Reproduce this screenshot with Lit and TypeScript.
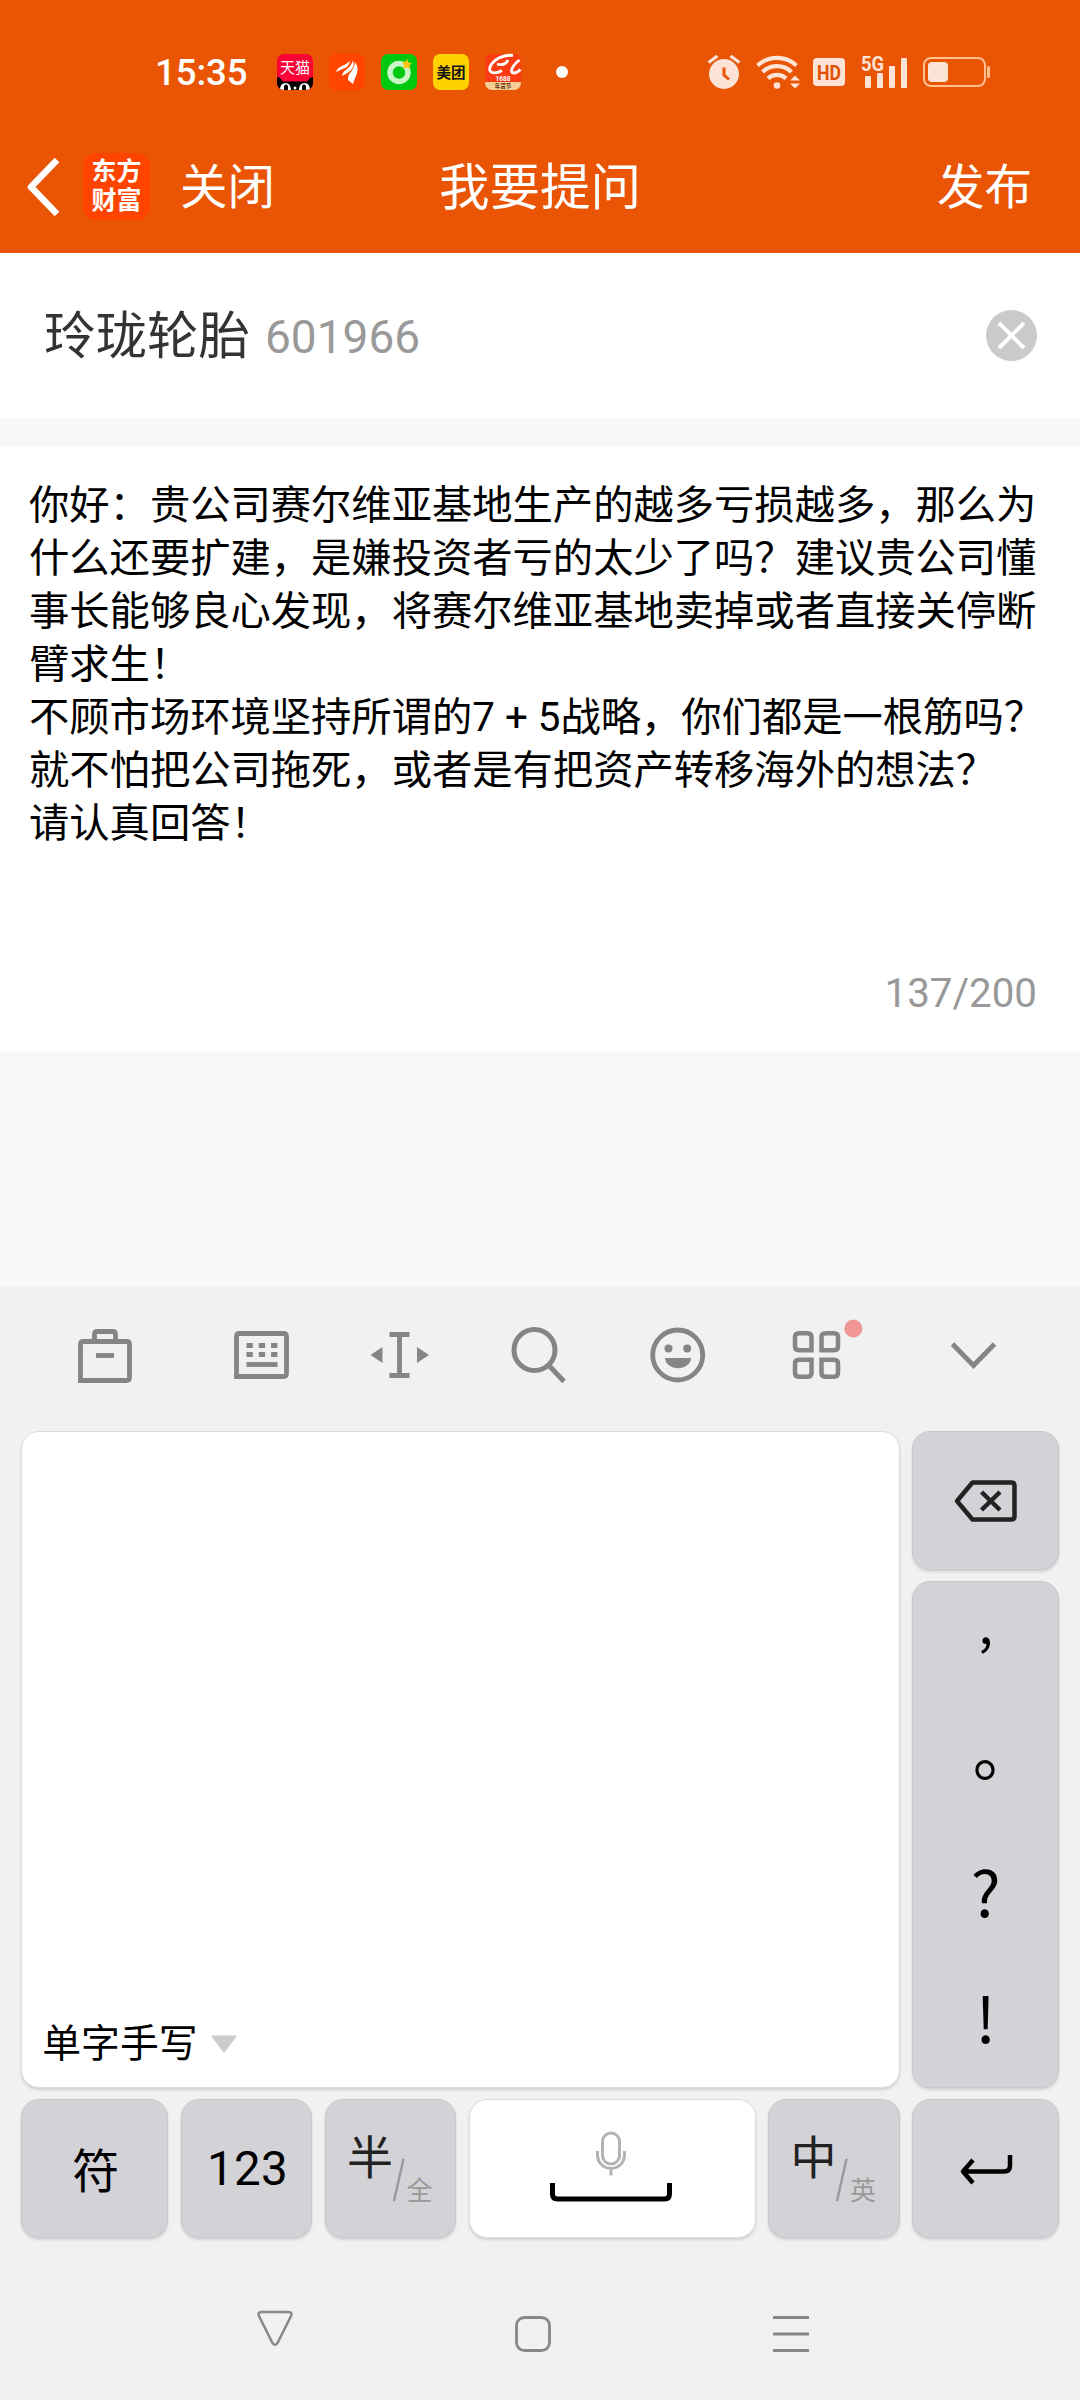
import { LitElement, html, css, svg } from "lit";
import { customElement, property } from "lit/decorators.js";

const SANS = css`Roboto, "Noto Sans CJK SC", sans-serif`;

@customElement("status-bar")
class StatusBar extends LitElement {
  static styles = css`
    :host { display: flex; justify-content: space-between; align-items: center; height: 64px; padding: 40px 90px 0 155px; font-family: ${SANS}; }
    .left, .apps, .right { display: flex; align-items: center; }
    .time { color: #fff; font-size: 36.500px; font-weight: 500; line-height: 40px; width: 122px; padding-top: 2px; }
    .apps { gap: 16px; }
    .dot { width: 12px; height: 12px; border-radius: 50%; background: #fff; margin-left: 35px; }
    .right { color: #fde3d5; }
    .alarm { margin-right: 15px; }
    .wifi { margin-right: 12px; }
    .hd { margin-right: 16px; }
    .signal { margin-right: 15px; }
    svg { display: block; overflow: visible; }
  `;
  render() {
    return html`
      <div class="left">
        <span class="time">15:35</span>
        <div class="apps">
          <svg width="36" height="36" viewBox="0 0 36 36">
            <defs><clipPath id="r"><rect width="36" height="36" rx="7" /></clipPath></defs>
            <g clip-path="url(#r)">
              <rect width="36" height="36" fill="#ff0036" />
              <text x="18" y="19" font-size="15" text-anchor="middle" fill="#fff">天猫</text>
              <path d="M0 36V23c3 0 4 2.500 6 4.500h24c2-2 3-4.500 6-4.500v13z" fill="#000" />
              <path d="M3 36c0-4 2-7 5.500-7s5.500 3 5.500 7zM22 36c0-4 2-7 5.500-7s5.500 3 5.500 7z" fill="#fff" />
              <path d="M7 36v-4l2-2 2 2v4zM25 36v-4l2-2 2 2v4z" fill="#000" />
              <circle cx="18" cy="34" r="1.500" fill="#fff" />
            </g>
          </svg>
          <svg width="36" height="36" viewBox="0 0 36 36">
            <rect width="36" height="36" rx="7" fill="#ff4500" />
            <path d="M7 18C9 12 14 13 21 7C20 14 15 14 7 18ZM13 22C14 15 21 16 24 6.500C27 15 19 19 13 22ZM19 26C18 19 25 18 26 8C32 16 26 22 24 30Z" fill="#fff" />
          </svg>
          <svg width="36" height="36" viewBox="0 0 36 36">
            <rect width="36" height="36" rx="7" fill="#00c80e" />
            <circle cx="18" cy="18.500" r="9" fill="none" stroke="#c9f5c9" stroke-width="5.500" />
            <path d="M26 5l1.500 3.500 3.500.5-2.500 2.500.5 3.500-3.500-1.500-3.500 1 1-3.500-2-3 3.500-.3z" fill="#ffc61a" />
          </svg>
          <svg width="36" height="36" viewBox="0 0 36 36">
            <rect width="36" height="36" rx="7" fill="#ffd100" />
            <text x="18" y="23.5" font-size="14.500" font-weight="700" text-anchor="middle" fill="#111">美团</text>
          </svg>
          <svg width="36" height="36" viewBox="0 0 36 36">
            <rect width="36" height="36" rx="7" fill="#fb3c12" />
            <path d="M28 1.500C18 0 8 6 5 13c-2 7 6 7 12 3.500M12 10c6 2 10-1 11-4M34.500 6c-8 6-10 13-6 13 3 0 5-1.500 7-3.500" fill="none" stroke="#fff" stroke-width="2.800" />
            <text x="18" y="26.500" font-size="6.500" font-weight="700" text-anchor="middle" fill="#fff">1688</text>
            <path d="M0 28h36v1a7 7 0 0 1-7 7H7a7 7 0 0 1-7-7z" fill="#f6cf94" />
            <text x="18" y="34.200" font-size="5.500" font-weight="700" text-anchor="middle" fill="#5a2708">年货节</text>
          </svg>
        </div>
        <i class="dot"></i>
      </div>
      <div class="right">
        <svg class="alarm" width="33" height="36" viewBox="0 0 33 36" fill="none">
          <circle cx="16" cy="20" r="15" fill="currentColor" />
          <path d="M.5 8.500 9.500 2M31.500 8.500 22.500 2" stroke="currentColor" stroke-width="3.200" />
          <path d="M16 13.500v7.500l5 4.500" stroke="#e95504" stroke-width="3" />
        </svg>
        <svg class="wifi" width="45" height="36" viewBox="0 0 45 36" fill="none" stroke="currentColor" stroke-width="4.200">
          <path d="M1.500 11.500a29 29 0 0 1 39 0M6.500 18a21 21 0 0 1 29 0M12 24.500a13 13 0 0 1 18 0" />
          <circle cx="21" cy="31.500" r="3.300" fill="currentColor" stroke="none" />
          <path d="M34 26.500l5-5 5 5zM34 29.500l5 5 5-5z" fill="currentColor" stroke="none" />
        </svg>
        <svg class="hd" width="32" height="30" viewBox="0 0 32 30">
          <rect y="1" width="32" height="28" rx="4" fill="currentColor" />
          <text x="16" y="22.500" font-size="21" font-weight="700" text-anchor="middle" textLength="24" lengthAdjust="spacingAndGlyphs" fill="#e05000">HD</text>
        </svg>
        <svg class="signal" width="47" height="36" viewBox="0 0 47 36" fill="currentColor">
          <text x="0" y="17" font-size="20" font-weight="700" textLength="23" lengthAdjust="spacingAndGlyphs">5G</text>
          <rect x="4" y="22" width="6" height="12" rx="1" /><rect x="16" y="19" width="6" height="15" rx="1" />
          <rect x="28" y="12" width="6" height="22" rx="1" /><rect x="40" y="4" width="6" height="30" rx="1" />
        </svg>
        <svg width="67" height="30" viewBox="0 0 67 30" fill="none">
          <rect x="1" y="1" width="61" height="28" rx="7" stroke="#ffc090" stroke-width="2" />
          <rect x="5" y="5" width="20" height="20" rx="4" fill="currentColor" />
          <rect x="64" y="9" width="3" height="12" rx="1.500" fill="#ffc090" />
        </svg>
      </div>`;
  }
}

@customElement("nav-header")
class NavHeader extends LitElement {
  static styles = css`
    :host { display: grid; grid-template-columns: 1fr auto 1fr; align-items: center; height: 133px; padding: 16px 48px 0; color: #fff; font-family: ${SANS}; font-size: 47.500px; line-height: 60px; }
    .left { display: flex; align-items: center; margin-left: -22px; }
    .close, .title, .post { padding-top: 3px; }
    .back { display: block; margin-right: 23px; }
    .logo { display: flex; flex-direction: column; justify-content: center; width: 67px; height: 67px; margin-right: 30px; border-radius: 13px; background: #ff4400; text-align: center; font-size: 25px; line-height: 28.500px; font-weight: 700; }
    .title { font-size: 50.500px; }
    .post { text-align: right; }
  `;
  render() {
    return html`
      <div class="left">
        <svg class="back" width="34" height="58" viewBox="0 0 34 58" fill="none" stroke="#fff" stroke-width="6.500">
          <path d="M31 2 5 29 31 56" stroke-linejoin="round" />
        </svg>
        <div class="logo"><span>东方</span><span>财富</span></div>
        <span class="close">关闭</span>
      </div>
      <span class="title">我要提问</span>
      <span class="post">发布</span>`;
  }
}

@customElement("question-form")
class QuestionForm extends LitElement {
  static styles = css`
    :host { display: block; font-family: ${SANS}; background: #f6f8fa; }
    .stock { display: flex; align-items: center; height: 165px; padding: 0 43px 0 44px; background: #fff; }
    .name { color: #333; font-size: 51.500px; line-height: 60px; padding-top: 3px; }
    .code { color: #999; font-size: 46px; line-height: 60px; margin-left: 15px; padding-top: 2px; }
    .clear { display: block; margin-left: auto; }
    .body { display: flex; flex-direction: column; justify-content: space-between; margin-top: 29px; padding: 32px 43px 30px 29px; height: 542.500px; background: #fff; }
    .text { color: #000; font-size: 40.300px; line-height: 53px; white-space: pre; }
    .count { align-self: flex-end; color: #999; font-size: 40.300px; line-height: 56px; }
  `;
  render() {
    const lines = [
      "你好：贵公司赛尔维亚基地生产的越多亏损越多，那么为",
      "什么还要扩建，是嫌投资者亏的太少了吗？建议贵公司懂",
      "事长能够良心发现，将赛尔维亚基地卖掉或者直接关停断",
      "臂求生！",
      "不顾市场环境坚持所谓的7 + 5战略，你们都是一根筋吗？",
      "就不怕把公司拖死，或者是有把资产转移海外的想法？",
      "请认真回答！",
    ];
    return html`
      <div class="stock">
        <span class="name">玲珑轮胎</span><span class="code">601966</span>
        <svg class="clear" width="51" height="51" viewBox="0 0 51 51">
          <circle cx="25.500" cy="25.500" r="25.500" fill="#cacaca" />
          <path d="M13 13 38 38M38 13 13 38" stroke="#fff" stroke-width="4" />
        </svg>
      </div>
      <div class="body">
        <div class="text">${lines.map((l) => html`<div>${l}</div>`)}</div>
        <span class="count">137/200</span>
      </div>`;
  }
}

@customElement("tool-row")
class ToolRow extends LitElement {
  static styles = css`
    :host { display: flex; align-items: center; height: 136px; padding: 0 35.500px; color: #858585; }
    .slot { width: 138.800px; flex: none; display: flex; justify-content: center; }
    .slot:first-child { margin-right: 18px; }
    .slot:last-child { margin-left: 18px; }
    svg { display: block; overflow: visible; }
  `;
  render() {
    const icons = [
      svg`<path d="M7.500 61.500V25.500q0-3 3-3h43q3 0 3 3v33q0 3-3 3z" /><path d="M21.500 22V15.500q0-3 3-3h15q3 0 3 3V22" /><path d="M23 36.500h18" />`,
      svg`<path d="M6.500 57.500V17.500q0-3 3-3h44q3 0 3 3v37q0 3-3 3z" /><path d="M16.500 26.500h31M16.500 35.500h31" stroke-dasharray="6.300 6" /><path d="M16.500 45.500h31" />`,
      svg`<path d="M21.500 15.500h20M21.500 56.500h20M31.500 15v42" /><path d="M2.500 36l12-8v16zM61 36 49 28v16z" fill="currentColor" stroke="none" />`,
      svg`<circle cx="27.500" cy="31" r="20.500" stroke-width="5" /><path d="M41.500 46 57 62.500" stroke-width="5" />`,
      svg`<circle cx="31.700" cy="36" r="25" /><circle cx="22.500" cy="29.500" r="4" fill="currentColor" stroke="none" /><circle cx="41.200" cy="29.500" r="4" fill="currentColor" stroke="none" /><path d="M19 39h26c-1 13.500-25 13.500-26 0z" fill="currentColor" stroke="none" />`,
      svg`<g stroke-width="4.500"><path d="M26.500 31.300v-13q0-4-4-4H14q-4 0-4 4v9q0 4 4 4zM36.500 31.300v-13q0-4 4-4H49q4 0 4 4v9q0 4-4 4zM26.500 40.800v13q0 4-4 4H14q-4 0-4-4v-9q0-4 4-4zM36.500 40.800v13q0 4 4 4H49q4 0 4-4v-9q0-4-4-4z" /></g><circle cx="68.300" cy="9.500" r="9" fill="#f09696" stroke="none" />`,
      svg`<path d="M10.500 25 31.500 46.500 52.500 25" />`,
    ];
    return html`${icons.map((i) => html`<div class="slot"><svg width="64" height="72" viewBox="0 0 64 72" fill="none" stroke="currentColor" stroke-width="4.800">${i}</svg></div>`)}`;
  }
}

@customElement("key-cap")
class KeyCap extends LitElement {
  @property({ type: Boolean, reflect: true }) light = false;
  static styles = css`
    :host { display: flex; align-items: center; justify-content: center; box-sizing: border-box; border-radius: 18px; background: #d3d2d7; border: 1px solid #c8c8cc; box-shadow: 0 2px 3px rgba(0, 0, 0, 0.13); }
    :host([light]) { background: #fff; border-color: #dcdcdc; }
  `;
  render() {
    return html`<slot></slot>`;
  }
}

@customElement("ime-keyboard")
class ImeKeyboard extends LitElement {
  static styles = css`
    :host { display: block; height: 1113px; background: #f1f1f1; font-family: ${SANS}; color: #000; }
    svg { display: block; }
    .main { display: grid; grid-template-columns: 879px 147px; grid-template-rows: 139px 507px; gap: 11px 12px; padding: 0 21.300px; margin-top: 8px; }
    .pad { grid-row: span 2; align-items: flex-end; justify-content: flex-start; }
    .mode { display: flex; align-items: center; gap: 13px; padding: 0 0 16px 20px; font-size: 38.800px; line-height: 54px; }
    .marks { flex-direction: column; justify-content: flex-start; align-items: center; font-family: "Noto Sans CJK SC", sans-serif; font-size: 63px; line-height: 82px; padding-top: 16px; }
    .mark { height: 125.500px; }
    .mark.last { height: 82px; }
    .comma { transform: translateY(-17px); font-size: 52px; }
    .stop { transform: translate(18.500px, -17px); }
    .row { display: flex; gap: 12.600px; padding: 11px 21.300px 0; }
    .row key-cap { height: 139px; flex: none; width: 131.300px; }
    .row .side { width: 147px; }
    .row .space { width: 287px; flex-direction: column; }
    .sym { font-size: 47px; padding: 0 0 3px 2px; }
    .num { font-size: 47.500px; letter-spacing: 0.3px; padding-left: 2px; }
    .pair { display: flex; align-items: center; width: 84px; height: 70px; }
    .big { font-size: 46px; line-height: 48px; color: #222; align-self: flex-start; margin: 0 1px 0 -1.500px; }
    .slash { margin: 23px 0 0 -2px; align-self: flex-start; }
    .small { font-size: 26px; line-height: 30px; color: #999; align-self: flex-end; margin: 0 0 -2px 1px; }
    .spacekey { display: flex; flex-direction: column; align-items: center; gap: 7px; margin: 0 1.500px 4px 0; }
    .nav { display: flex; align-items: flex-start; padding: 72px 271px 0 256.500px; justify-content: space-between; }
    .nav .home, .nav .menu { margin-top: 6px; }
    .enter { margin-top: 2px; }
  `;
  pair(a: string, b: string) {
    return html`<div class="pair"><span class="big">${a}</span>
      <svg class="slash" width="14" height="46" viewBox="0 0 14 46"><path d="M12 1 2 45" stroke="#999" stroke-width="2.500" /></svg>
      <span class="small">${b}</span></div>`;
  }
  render() {
    return html`
      <tool-row></tool-row>
      <div class="main">
        <key-cap light class="pad">
          <div class="mode">单字手写<svg width="26" height="18" viewBox="0 0 26 18"><path d="M1 .5h24q1 0 .5 1L14 17q-1 1-2 0L.500 1.500Q0 .500 1 .500z" fill="#ccc" /></svg></div>
        </key-cap>
        <key-cap>
          <svg width="64" height="42" viewBox="0 0 64 42" fill="none" stroke="#222" stroke-width="4.500" stroke-linejoin="round">
            <path d="M3 21 18.500 2.500H57q3.500 0 3.500 3v31q0 3-3.500 3H18.500z" /><path d="M27.500 12 46 30M46 12 27.500 30" />
          </svg>
        </key-cap>
        <key-cap class="marks">
          <span class="mark comma">,</span><span class="mark stop">。</span><span class="mark">?</span><span class="mark last">!</span>
        </key-cap>
      </div>
      <div class="row">
        <key-cap class="side"><span class="sym">符</span></key-cap>
        <key-cap><span class="num">123</span></key-cap>
        <key-cap>${this.pair("半", "全")}</key-cap>
        <key-cap light class="space">
          <div class="spacekey">
            <svg width="30" height="45" viewBox="0 0 30 45" fill="none" stroke="#b3b3b3" stroke-width="3">
              <rect x="6.500" y="2" width="17" height="31" rx="8.500" /><path d="M1.500 20v4a13.500 13.500 0 0 0 27 0v-4M15 38v6.500" />
            </svg>
            <svg width="122" height="20" viewBox="0 0 122 20" fill="none" stroke="#000" stroke-width="5">
              <path d="M2.500 0v11q0 5 5 5h107q5 0 5-5V0" />
            </svg>
          </div>
        </key-cap>
        <key-cap>${this.pair("中", "英")}</key-cap>
        <key-cap class="side">
          <svg class="enter" width="54" height="32" viewBox="0 0 54 32" fill="none" stroke="#000" stroke-width="4.500" stroke-linejoin="round">
            <path d="M51 1v10.500q0 6-6 6H4M14 6 4 17.500 14 29" />
          </svg>
        </key-cap>
      </div>
      <div class="nav">
        <svg width="36" height="36" viewBox="0 0 36 36" fill="none" stroke="#888" stroke-width="2.500"><path d="M4.500 2h27q4 0 2.500 4L20.500 33q-2.500 3.500-5 0L2 6Q.500 2 4.500 2z" /></svg>
        <svg class="home" width="36" height="36" viewBox="0 0 36 36" fill="none" stroke="#888" stroke-width="2.800"><rect x="1.500" y="1.500" width="33" height="33" rx="8" /></svg>
        <svg class="menu" width="36" height="36" viewBox="0 0 36 36" stroke="#888" stroke-width="3"><path d="M0 1.500h36M0 18h36M0 34.500h36" /></svg>
      </div>`;
  }
}

@customElement("app-root")
class AppRoot extends LitElement {
  static styles = css`
    :host { display: flex; flex-direction: column; width: 1080px; height: 2400px; overflow: hidden; background: #f6f8fa; }
    .top { background: #e95504; height: 253px; flex: none; }
    ime-keyboard { margin-top: auto; }
  `;
  render() {
    return html`
      <div class="top"><status-bar></status-bar><nav-header></nav-header></div>
      <question-form></question-form>
      <ime-keyboard></ime-keyboard>`;
  }
}
